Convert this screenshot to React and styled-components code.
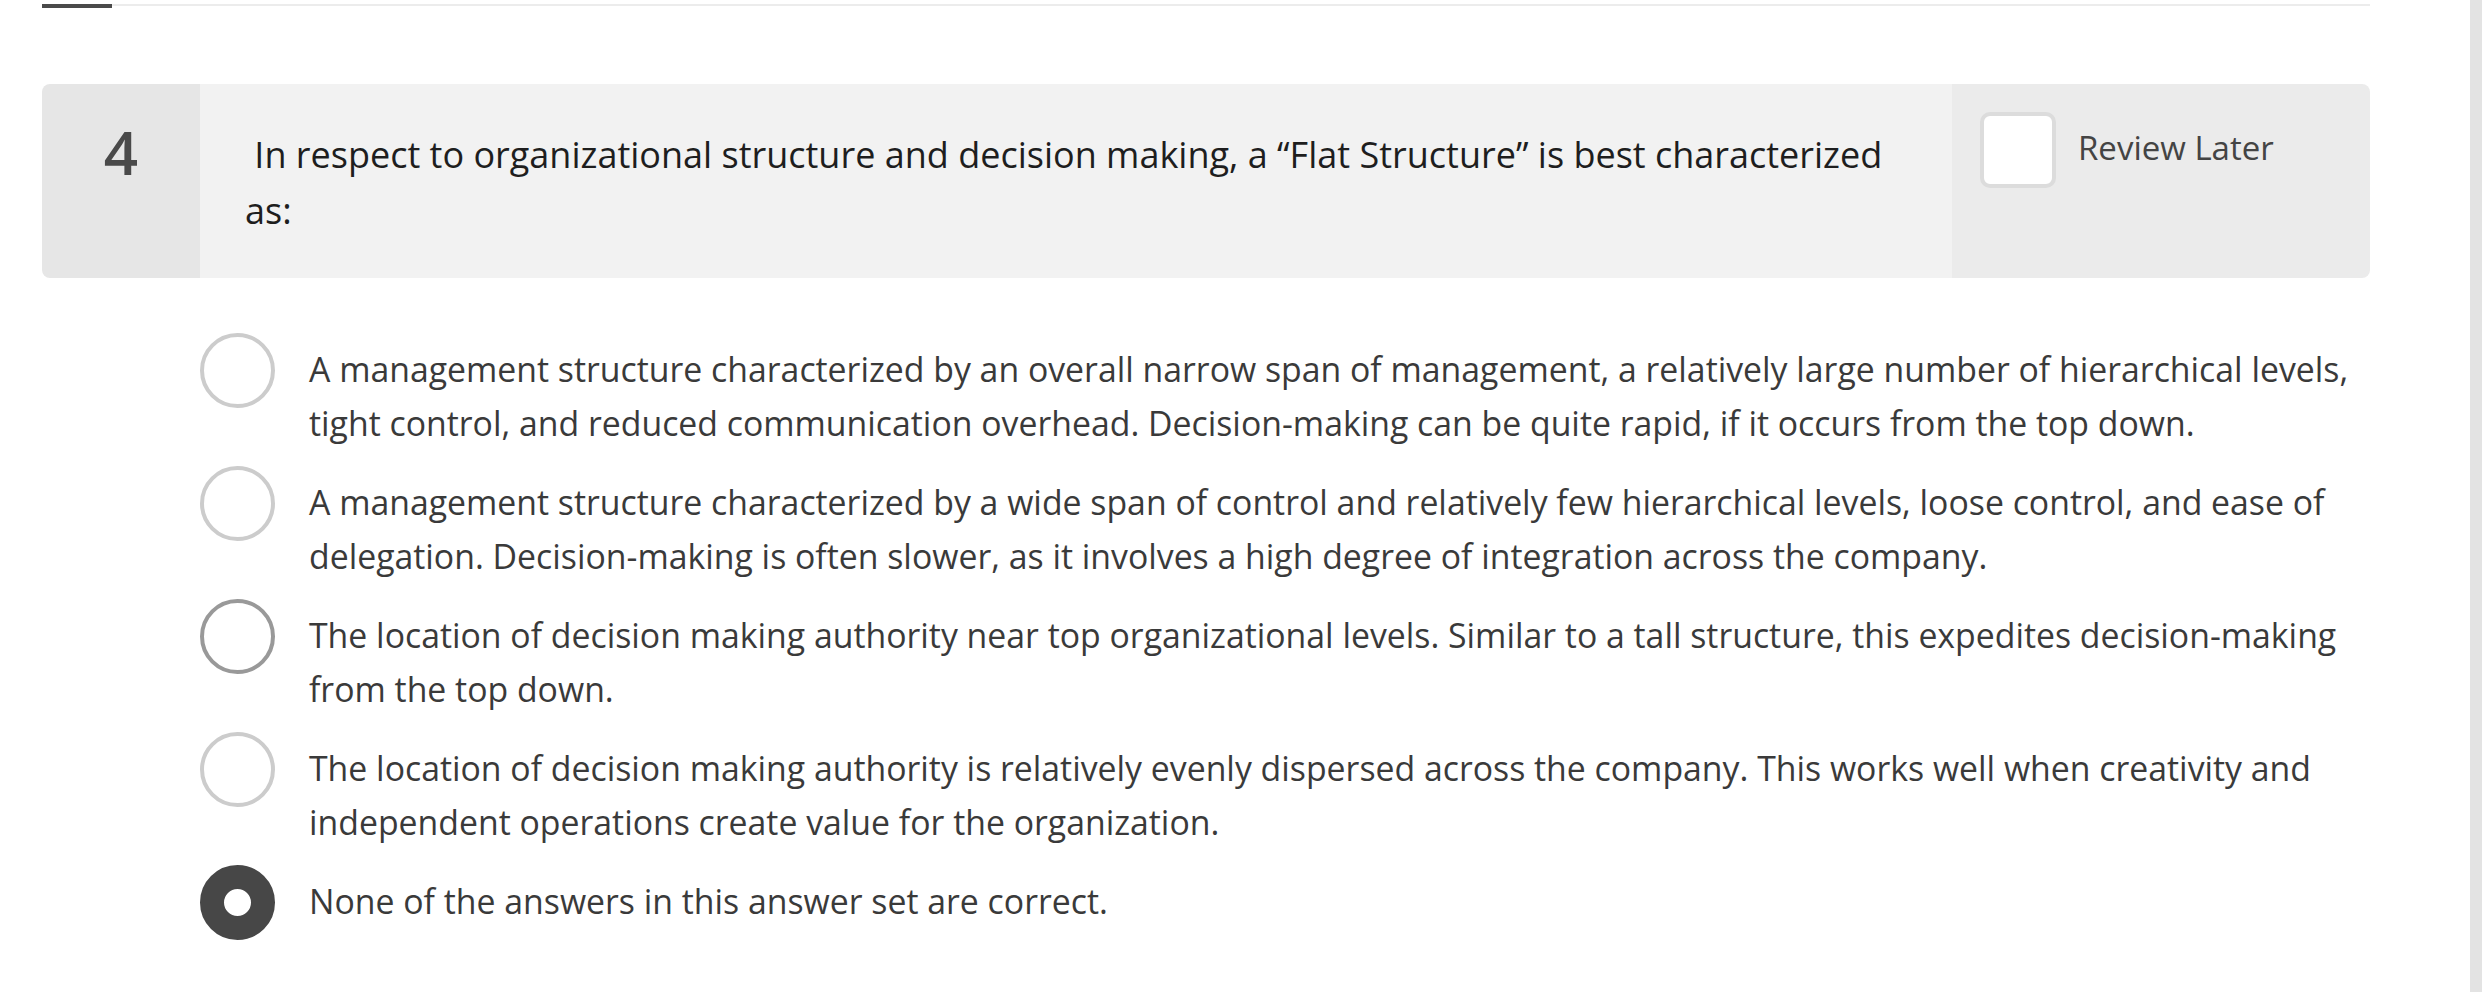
import React from 'react'
import styled, { createGlobalStyle } from 'styled-components'

const GlobalStyle = createGlobalStyle`
  html, body {
    margin: 0;
    padding: 0;
    background: #ffffff;
    overflow: hidden;
  }
  body {
    font-family: 'Open Sans', 'Noto Sans', sans-serif;
  }
`

const Page = styled.div`
  display: flex;
  height: 992px;
`

const Main = styled.div`
  flex: 1;
  padding: 4px 100px 0 42px;
`

const ScrollTrack = styled.div`
  width: 12px;
  height: 100%;
  background: #e3e3e3;
`

const Progress = styled.div`
  display: flex;
  align-items: flex-start;
`

const ProgressDone = styled.div`
  width: 70px;
  height: 4px;
  background: #4a4a4a;
`

const ProgressRest = styled.div`
  flex: 1;
  height: 2px;
  background: #ececec;
`

const Card = styled.div`
  display: flex;
  margin-top: 76px;
  min-height: 194px;
  border-radius: 8px;
  overflow: hidden;
`

const NumberCol = styled.div`
  width: 158px;
  flex-shrink: 0;
  background: #e6e6e6;
  padding-top: 28px;
  text-align: center;
  font-size: 60px;
  font-weight: 600;
  color: #4a4a4a;
  line-height: 1.362;
`

const QuestionCol = styled.div`
  flex: 1;
  background: #f2f2f2;
  padding: 43px 45px 39px;
  font-size: 36px;
  line-height: 56px;
  color: #1e1e1e;
`

const ReviewCol = styled.label`
  width: 418px;
  flex-shrink: 0;
  box-sizing: border-box;
  background: #ebebeb;
  padding: 28px;
  display: flex;
  align-items: flex-start;
  gap: 22px;
`

const Checkbox = styled.span`
  width: 76px;
  height: 76px;
  box-sizing: border-box;
  border: 4px solid #dcdcdc;
  border-radius: 10px;
  background: #ffffff;
  flex-shrink: 0;
`

const ReviewText = styled.span`
  padding-top: 13px;
  font-size: 33px;
  color: #444444;
`

const Options = styled.div`
  margin-top: 55px;
  padding-left: 158px;
  display: flex;
  flex-direction: column;
  gap: 16px;
`

const Option = styled.div`
  display: flex;
  align-items: flex-start;
  gap: 34px;
`

const Radio = styled.span`
  width: 75px;
  height: 75px;
  box-sizing: border-box;
  flex-shrink: 0;
  border-radius: 50%;
  border: ${(p) => (p.checked ? '24px' : '4px')} solid
    ${(p) => (p.checked ? '#474747' : p.hover ? '#999999' : '#cccccc')};
  background: #ffffff;
`

const OptionText = styled.div`
  padding-top: 9px;
  font-size: 33.8px;
  line-height: 54px;
  color: #3a3a3a;
`

const answers = [
  'A management structure characterized by an overall narrow span of management, a relatively large number of hierarchical levels, tight control, and reduced communication overhead. Decision-making can be quite rapid, if it occurs from the top down.',
  'A management structure characterized by a wide span of control and relatively few hierarchical levels, loose control, and ease of delegation. Decision-making is often slower, as it involves a high degree of integration across the company.',
  'The location of decision making authority near top organizational levels. Similar to a tall structure, this expedites decision-making from the top down.',
  'The location of decision making authority is relatively evenly dispersed across the company. This works well when creativity and independent operations create value for the organization.',
  'None of the answers in this answer set are correct.',
]

export default function App() {
  const selected = 4
  const hovered = 2
  return (
    <>
      <GlobalStyle />
      <Page>
        <Main>
          <Progress>
            <ProgressDone />
            <ProgressRest />
          </Progress>
          <Card>
            <NumberCol>4</NumberCol>
            <QuestionCol>
              &nbsp;In respect to organizational structure and decision making, a “Flat Structure” is best characterized as:
            </QuestionCol>
            <ReviewCol>
              <Checkbox />
              <ReviewText>Review Later</ReviewText>
            </ReviewCol>
          </Card>
          <Options>
            {answers.map((a, i) => (
              <Option key={i}>
                <Radio checked={i === selected} hover={i === hovered} />
                <OptionText>{a}</OptionText>
              </Option>
            ))}
          </Options>
        </Main>
        <ScrollTrack />
      </Page>
    </>
  )
}
